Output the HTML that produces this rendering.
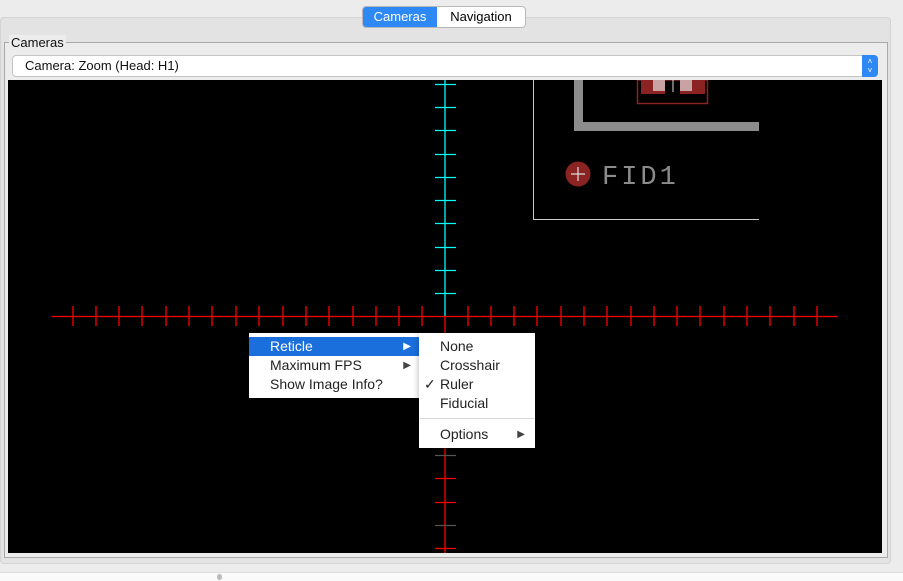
<!DOCTYPE html>
<html><head><style>
body{margin:0;width:903px;height:580px;background:#ececec;font-family:"Liberation Sans",sans-serif;position:relative;overflow:hidden}
.abs{position:absolute}
.tabs{left:362px;top:6px;height:20px;border:1px solid #b8b8b8;border-radius:4px;background:#fff;display:flex;font-size:13px;overflow:hidden}
.tabs div{line-height:20px;text-align:center}
.menu{background:#fff;font-size:14px;color:#222;box-shadow:0 2px 6px rgba(0,0,0,.3)}
.mi{position:absolute;left:0;right:0;height:19px;line-height:19px}
</style></head><body>
<div class="abs" style="left:0;top:17px;width:889px;height:545px;background:#e3e3e3;border:1px solid #d4d4d4;border-radius:4px"></div>
<div class="abs tabs"><div style="background:#2f89f5;color:#fff;width:74px">Cameras</div><div style="width:88px">Navigation</div></div>
<div class="abs" style="left:4px;top:42px;width:882px;height:514px;border:1px solid #a9a9a9;background:#ececec"></div>
<div class="abs" style="left:9px;top:35px;background:#ececec;font-size:13px;padding:0 2px;color:#111">Cameras</div>
<div class="abs" style="left:12px;top:55px;width:864px;height:20px;background:#fff;border:1px solid #c4c4c4;border-radius:4px;font-size:13px;line-height:20px;color:#111"><span style="padding-left:12px">Camera: Zoom (Head: H1)</span>
<div class="abs" style="right:-1px;top:-1px;width:16px;height:22px;background:#2f89f5;border-radius:0 4px 4px 0;color:#fff;font-size:8px;line-height:9px;text-align:center;padding-top:2px;box-sizing:border-box">˄<br>˅</div></div>
<svg class="abs" style="left:8px;top:80px" width="874" height="473" viewBox="8 80 874 473">
<rect x="8" y="80" width="874" height="473" fill="#000"/>
<path d="M533.5 80V219.5H759" stroke="#ccc" fill="none"/>
<path d="M578.5 80V126.5H759" stroke="#8c8c8c" stroke-width="9" fill="none"/>
<rect x="637.5" y="80" width="70" height="23.5" fill="none" stroke="#8b2323" stroke-width="1.5"/>
<rect x="641" y="80" width="24" height="14" fill="#8b2323"/><rect x="680" y="80" width="25" height="14" fill="#8b2323"/>
<rect x="653" y="80" width="12" height="11" fill="#c9a3a3"/><rect x="680" y="80" width="12" height="11" fill="#c9a3a3"/>
<path d="M673 80V92" stroke="#ddd"/>
<circle cx="578" cy="174" r="12.5" fill="#8b2323"/><path d="M571 174H585M578 167V181" stroke="#ddd" stroke-width="1.2"/>
<text x="602" y="184" fill="#8c8c8c" font-family="Liberation Mono,monospace" font-size="27" letter-spacing="3">FID1</text>
<path d="M445 80V316" stroke="#0ff" stroke-width="1.3"/>
<path d="M445 316V553" stroke="#f00" stroke-width="1.3"/>
<path d="M52 316.5H838" stroke="#f00" stroke-width="1.3"/>
<g stroke="#0ff" stroke-width="1.3">
<path d="M435 84.5h21M435 107.5h21M435 130.5h21M435 154.5h21M435 177.5h21M435 200.5h21M435 223.5h21M435 247.5h21M435 270.5h21M435 293.5h21"/></g>
<g stroke="#f00" stroke-width="1.3">
<path d="M73 306v20M96 306v20M119 306v20M142 306v20M166 306v20M189 306v20M212 306v20M236 306v20M259 306v20M283 306v20M306 306v20M329 306v20M353 306v20M376 306v20M399 306v20M422 306v20M468 306v20M491 306v20M514 306v20M537 306v20M561 306v20M584 306v20M607 306v20M631 306v20M654 306v20M677 306v20M700 306v20M724 306v20M747 306v20M770 306v20M794 306v20M817 306v20"/>
<path d="M435 478.5h21M435 502.5h21M435 548.5h21"/></g>
<path d="M435 455.5h21M435 525.5h21" stroke="#555" stroke-width="1.3"/>
</svg>
<div class="abs menu" style="left:249px;top:333px;width:170px;height:65px">
<div class="mi" style="top:4px;background:#1a6fdc;color:#fff"><span style="padding-left:21px">Reticle</span><span class="abs" style="right:8px;font-size:10px">▶</span></div>
<div class="mi" style="top:23px"><span style="padding-left:21px">Maximum FPS</span><span class="abs" style="right:8px;font-size:10px;color:#444">▶</span></div>
<div class="mi" style="top:42px"><span style="padding-left:21px">Show Image Info?</span></div>
</div>
<div class="abs menu" style="left:419px;top:333px;width:116px;height:115px">
<div class="mi" style="top:4px;padding-left:21px">None</div>
<div class="mi" style="top:23px;padding-left:21px">Crosshair</div>
<div class="mi" style="top:42px;padding-left:21px"><span class="abs" style="left:5px">✓</span>Ruler</div>
<div class="mi" style="top:61px;padding-left:21px">Fiducial</div>
<div class="abs" style="left:1px;right:1px;top:85px;height:1px;background:#d6d6d6"></div>
<div class="mi" style="top:92px;padding-left:21px">Options<span class="abs" style="right:10px;font-size:10px;color:#444">▶</span></div>
</div>
<div class="abs" style="left:0;top:572px;width:903px;height:8px;background:#fafafa;border-top:1px solid #ddd"></div>
<div class="abs" style="left:217px;top:574px;width:5px;height:6px;border-radius:3px;background:#bbb"></div>
</body></html>
